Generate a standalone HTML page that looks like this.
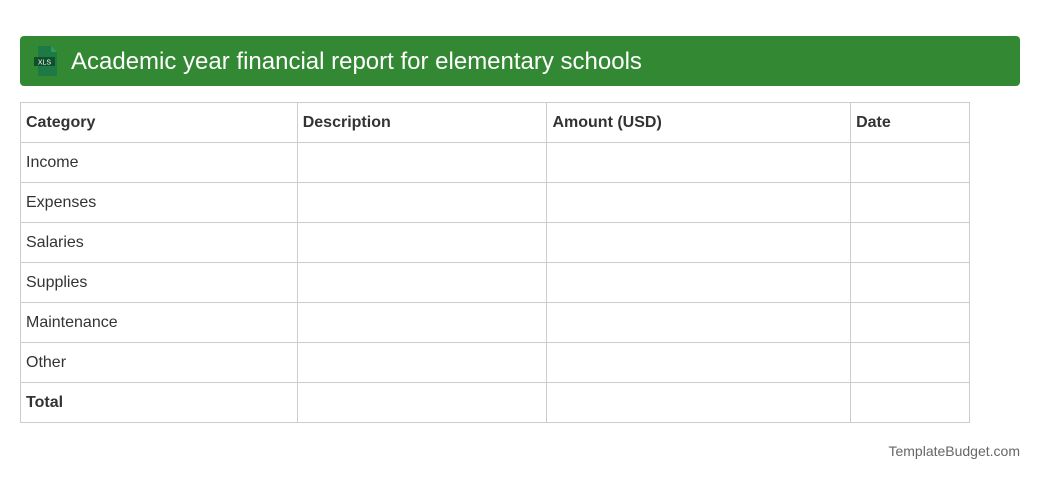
<!DOCTYPE html>
<html><head><meta charset="utf-8"><style>
body{margin:0;background:#fff;font-family:"Liberation Sans",Arial,sans-serif;width:1040px;height:480px;position:relative;overflow:hidden}
.hdr{position:absolute;left:20px;top:36px;width:1000px;height:50px;background:#338833;border-radius:4px}
.hdr .t{position:absolute;left:51px;top:12px;color:#fff;font-size:24px;line-height:28px}
.ic{position:absolute;left:13px;top:10px}
table{position:absolute;left:20px;top:102px;border-collapse:collapse;width:950px}
td{border:1px solid #ccc;height:39px;padding:0 0 0 5px;font-size:16px;color:#333;box-sizing:border-box}
tr{height:40px}
.b td{font-weight:bold}
.f{position:absolute;right:20px;top:443px;font-size:14px;color:#666}
</style></head><body>
<div class="hdr">
<svg class="ic" width="28" height="30" viewBox="0 0 28 30"><path d="M5 0h13l6 6v24H5z" fill="#1e7a45"/><path d="M18 0v6h6z" fill="#2e9c5c"/><rect x="1" y="11" width="21" height="9" fill="#0f4f2b"/><text x="11.5" y="18.5" font-size="7" fill="#fff" text-anchor="middle" font-family="Liberation Sans">XLS</text></svg>
<div class="t">Academic year financial report for elementary schools</div>
</div>
<table>
<colgroup><col style="width:277px"><col style="width:250px"><col style="width:304px"><col style="width:119px"></colgroup>
<tr class="b"><td>Category</td><td>Description</td><td>Amount (USD)</td><td>Date</td></tr>
<tr><td>Income</td><td></td><td></td><td></td></tr>
<tr><td>Expenses</td><td></td><td></td><td></td></tr>
<tr><td>Salaries</td><td></td><td></td><td></td></tr>
<tr><td>Supplies</td><td></td><td></td><td></td></tr>
<tr><td>Maintenance</td><td></td><td></td><td></td></tr>
<tr><td>Other</td><td></td><td></td><td></td></tr>
<tr class="b"><td>Total</td><td></td><td></td><td></td></tr>
</table>
<div class="f">TemplateBudget.com</div>
</body></html>
